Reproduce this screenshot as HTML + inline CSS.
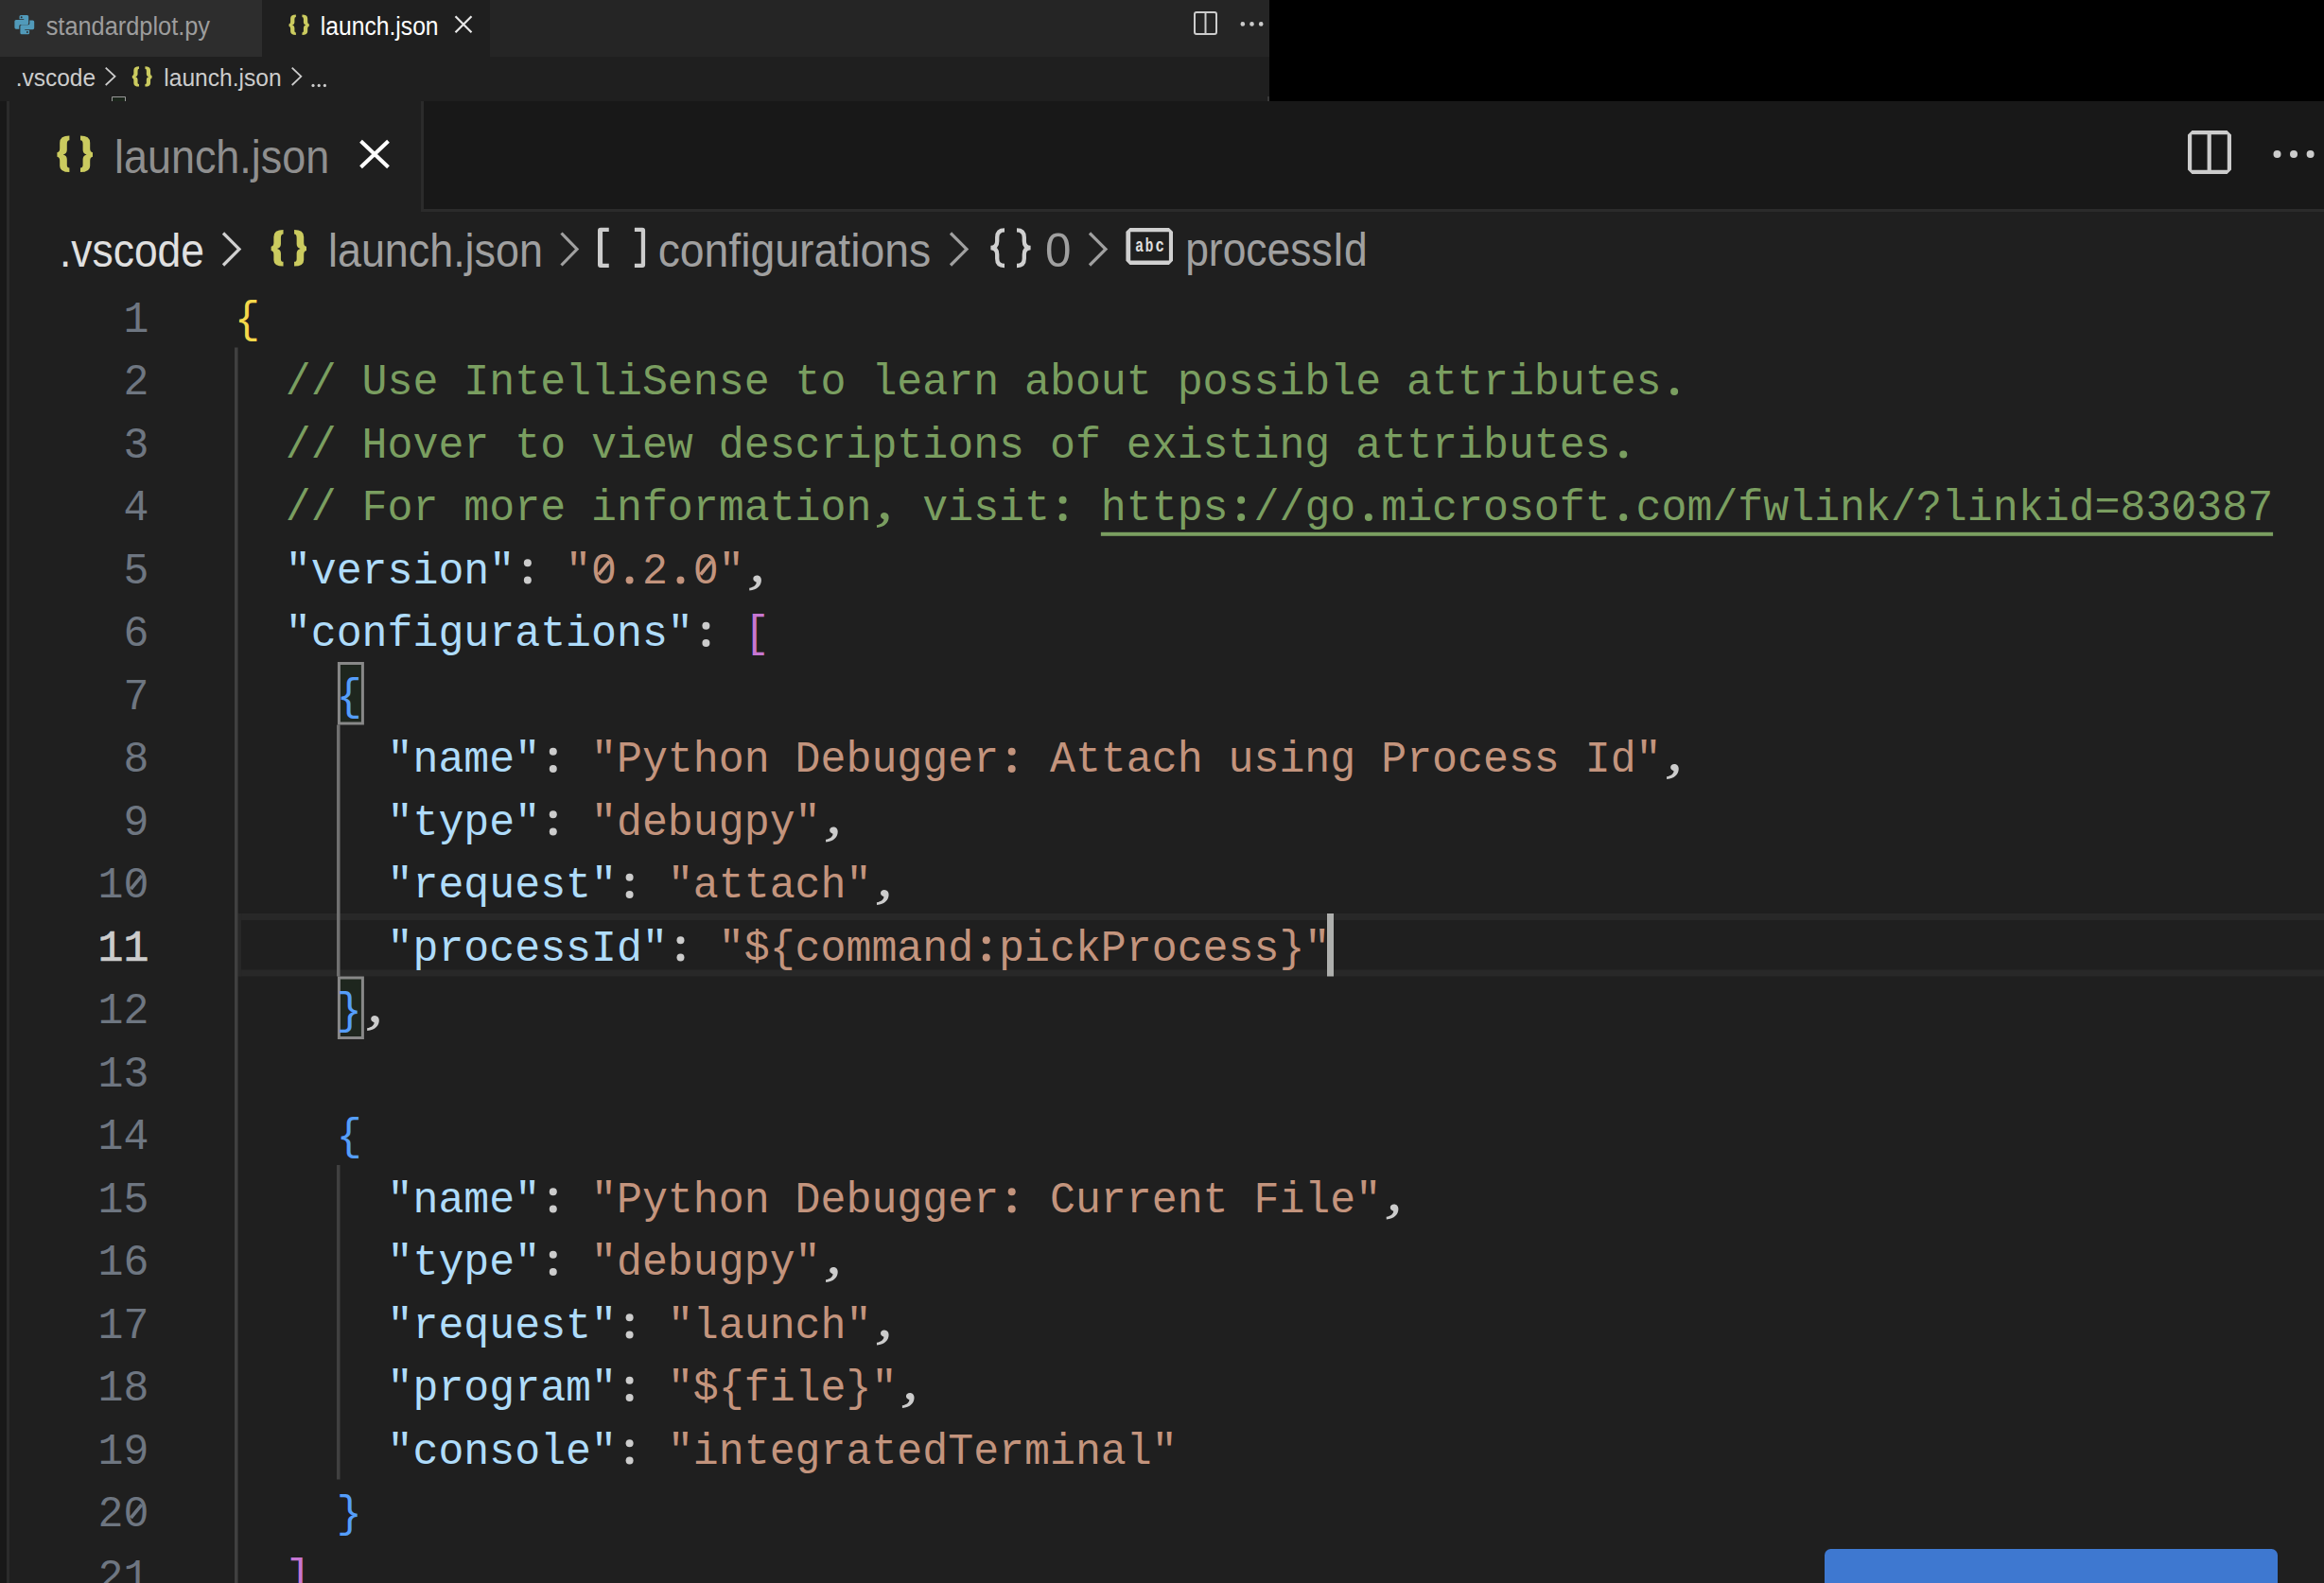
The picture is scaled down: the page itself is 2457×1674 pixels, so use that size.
<!DOCTYPE html><html><head><meta charset="utf-8"><style>
html,body{margin:0;padding:0;background:#1f1f1f;width:2457px;height:1674px;overflow:hidden}
svg{display:block}
</style></head><body>
<svg width="2457" height="1674" viewBox="0 0 2457 1674">
<rect x="0" y="0" width="2457" height="1674" fill="#1f1f1f"/>
<rect x="0" y="0" width="1342" height="60" fill="#252525"/>
<rect x="0" y="0" width="277" height="60" fill="#2d2d2d"/>
<rect x="277" y="0" width="241" height="60" fill="#1f1f1f"/>
<rect x="0" y="60" width="1342" height="47" fill="#1f1f1f"/>
<rect x="1342" y="0" width="1115" height="107" fill="#000000"/>
<rect x="1340.5" y="102" width="1" height="5" fill="#555555"/>
<rect x="118" y="102" width="15" height="5" fill="#1c261c"/>
<path d="M118.5 107 V102.5 H132.5 V107" fill="none" stroke="#9a9a9a" stroke-width="1"/>
<rect x="0" y="107" width="7" height="1567" fill="#181818"/>
<rect x="7" y="107" width="3" height="1567" fill="#2b2b2b"/>
<rect x="445" y="107" width="2012" height="117" fill="#2b2b2b"/>
<rect x="448" y="107" width="2009" height="114" fill="#181818"/>
<path d="M22 15.9 H28.7 Q30.2 15.9 30.2 17.4 V24.5 Q30.2 26 28.7 26 H21.8 Q20.3 26 20.3 27.5 V30.7 H17 Q15.4 30.7 15.4 29.1 V22.6 Q15.4 21 17 21 H25.3 V20.3 H20.5 V17.4 Q20.5 15.9 22 15.9 Z" fill="#519aba"/><circle cx="22.7" cy="18.2" r="0.95" fill="#2d2d2d"/>
<g transform="rotate(180 25.8 26.1)"><path d="M22 15.9 H28.7 Q30.2 15.9 30.2 17.4 V24.5 Q30.2 26 28.7 26 H21.8 Q20.3 26 20.3 27.5 V30.7 H17 Q15.4 30.7 15.4 29.1 V22.6 Q15.4 21 17 21 H25.3 V20.3 H20.5 V17.4 Q20.5 15.9 22 15.9 Z" fill="#519aba"/><circle cx="22.7" cy="18.2" r="0.95" fill="#2d2d2d"/></g>
<text x="48.69" y="37.40" font-family="Liberation Sans" font-size="26.80" font-weight="normal" fill="#9d9d9d" textLength="173.36" lengthAdjust="spacingAndGlyphs">standardplot.py</text>
<g transform="matrix(0.56649 0 0 0.55844 271.284 -64.692)" fill="#cbcb5f"><path d="M73.4 143.6 Q63.2 143.6 63.2 151 V157 Q63.2 160.8 60.4 161.3 V165.7 Q63.2 166.2 63.2 170 V175.5 Q63.2 182.1 73.4 182.1 V177.4 Q70.8 177.4 70.8 174.5 V168.5 Q70.8 164.7 66.8 163.5 Q70.8 162.3 70.8 158.5 V152.3 Q70.8 148.2 73.4 148.2 Z"/><path transform="matrix(-1 0 0 1 158.4 0)" d="M73.4 143.6 Q63.2 143.6 63.2 151 V157 Q63.2 160.8 60.4 161.3 V165.7 Q63.2 166.2 63.2 170 V175.5 Q63.2 182.1 73.4 182.1 V177.4 Q70.8 177.4 70.8 174.5 V168.5 Q70.8 164.7 66.8 163.5 Q70.8 162.3 70.8 158.5 V152.3 Q70.8 148.2 73.4 148.2 Z"/></g>
<text x="338.74" y="37.40" font-family="Liberation Sans" font-size="26.80" font-weight="normal" fill="#ffffff" textLength="124.87" lengthAdjust="spacingAndGlyphs">launch.json</text>
<path d="M481.5 17.3 L498.5 34.3 M498.5 17.3 L481.5 34.3" stroke="#e8e8e8" stroke-width="2.2" fill="none"/>
<rect x="1263" y="13" width="23" height="23" rx="2" fill="none" stroke="#cccccc" stroke-width="2"/>
<line x1="1274.5" y1="13" x2="1274.5" y2="36" stroke="#cccccc" stroke-width="2"/>
<circle cx="1313.8" cy="25.4" r="2.3" fill="#cccccc"/>
<circle cx="1323.5" cy="25.4" r="2.3" fill="#cccccc"/>
<circle cx="1333.2" cy="25.4" r="2.3" fill="#cccccc"/>
<text x="16.77" y="91.30" font-family="Liberation Sans" font-size="26.60" font-weight="normal" fill="#cccccc" textLength="84.32" lengthAdjust="spacingAndGlyphs">.vscode</text>
<path d="M111.7 71.6 L121.5 80.8 L111.7 90" stroke="#cccccc" stroke-width="1.8" fill="none"/>
<g transform="matrix(0.55319 0 0 0.55584 106.387 -9.619)" fill="#cbcb5f"><path d="M73.4 143.6 Q63.2 143.6 63.2 151 V157 Q63.2 160.8 60.4 161.3 V165.7 Q63.2 166.2 63.2 170 V175.5 Q63.2 182.1 73.4 182.1 V177.4 Q70.8 177.4 70.8 174.5 V168.5 Q70.8 164.7 66.8 163.5 Q70.8 162.3 70.8 158.5 V152.3 Q70.8 148.2 73.4 148.2 Z"/><path transform="matrix(-1 0 0 1 158.4 0)" d="M73.4 143.6 Q63.2 143.6 63.2 151 V157 Q63.2 160.8 60.4 161.3 V165.7 Q63.2 166.2 63.2 170 V175.5 Q63.2 182.1 73.4 182.1 V177.4 Q70.8 177.4 70.8 174.5 V168.5 Q70.8 164.7 66.8 163.5 Q70.8 162.3 70.8 158.5 V152.3 Q70.8 148.2 73.4 148.2 Z"/></g>
<text x="173.35" y="91.30" font-family="Liberation Sans" font-size="26.60" font-weight="normal" fill="#cccccc" textLength="124.25" lengthAdjust="spacingAndGlyphs">launch.json</text>
<path d="M308.7 71.6 L318.3 80.8 L308.7 90" stroke="#cccccc" stroke-width="1.8" fill="none"/>
<circle cx="331" cy="90.4" r="1.6" fill="#cccccc"/>
<circle cx="337.2" cy="90.4" r="1.6" fill="#cccccc"/>
<circle cx="343.4" cy="90.4" r="1.6" fill="#cccccc"/>
<g transform="matrix(1.00000 0 0 1.00000 0.000 0.000)" fill="#cbcb5f"><path d="M73.4 143.6 Q63.2 143.6 63.2 151 V157 Q63.2 160.8 60.4 161.3 V165.7 Q63.2 166.2 63.2 170 V175.5 Q63.2 182.1 73.4 182.1 V177.4 Q70.8 177.4 70.8 174.5 V168.5 Q70.8 164.7 66.8 163.5 Q70.8 162.3 70.8 158.5 V152.3 Q70.8 148.2 73.4 148.2 Z"/><path transform="matrix(-1 0 0 1 158.4 0)" d="M73.4 143.6 Q63.2 143.6 63.2 151 V157 Q63.2 160.8 60.4 161.3 V165.7 Q63.2 166.2 63.2 170 V175.5 Q63.2 182.1 73.4 182.1 V177.4 Q70.8 177.4 70.8 174.5 V168.5 Q70.8 164.7 66.8 163.5 Q70.8 162.3 70.8 158.5 V152.3 Q70.8 148.2 73.4 148.2 Z"/></g>
<text x="120.97" y="182.60" font-family="Liberation Sans" font-size="49.80" font-weight="normal" fill="#8f8f8f" textLength="227.24" lengthAdjust="spacingAndGlyphs">launch.json</text>
<path d="M381.5 149.3 L410.5 176.8 M410.5 149.3 L381.5 176.8" stroke="#ffffff" stroke-width="4" fill="none"/>
<path d="M2317.5 138 H2354.5 L2359 142.5 V179.5 L2354.5 184 H2317.5 L2313 179.5 V142.5 Z M2317.2 142.2 H2333.6 V179.8 H2317.2 Z M2337.8 142.2 H2354.8 V179.8 H2337.8 Z" fill="#cccccc" fill-rule="evenodd"/>
<circle cx="2407.5" cy="163" r="4" fill="#cccccc"/>
<circle cx="2425.0" cy="163" r="4" fill="#cccccc"/>
<circle cx="2442.6" cy="163" r="4" fill="#cccccc"/>
<text x="62.95" y="281.50" font-family="Liberation Sans" font-size="49.30" font-weight="normal" fill="#e0e0e0" textLength="153.03" lengthAdjust="spacingAndGlyphs">.vscode</text>
<path d="M236 246.5 L253 263.5 L236 280.5" stroke="#d0d0d0" stroke-width="3.2" fill="none"/>
<g transform="matrix(0.99468 0 0 1.00000 226.521 99.400)" fill="#cbcb5f"><path d="M73.4 143.6 Q63.2 143.6 63.2 151 V157 Q63.2 160.8 60.4 161.3 V165.7 Q63.2 166.2 63.2 170 V175.5 Q63.2 182.1 73.4 182.1 V177.4 Q70.8 177.4 70.8 174.5 V168.5 Q70.8 164.7 66.8 163.5 Q70.8 162.3 70.8 158.5 V152.3 Q70.8 148.2 73.4 148.2 Z"/><path transform="matrix(-1 0 0 1 158.4 0)" d="M73.4 143.6 Q63.2 143.6 63.2 151 V157 Q63.2 160.8 60.4 161.3 V165.7 Q63.2 166.2 63.2 170 V175.5 Q63.2 182.1 73.4 182.1 V177.4 Q70.8 177.4 70.8 174.5 V168.5 Q70.8 164.7 66.8 163.5 Q70.8 162.3 70.8 158.5 V152.3 Q70.8 148.2 73.4 148.2 Z"/></g>
<text x="346.98" y="281.50" font-family="Liberation Sans" font-size="49.30" font-weight="normal" fill="#a0a0a0" textLength="226.94" lengthAdjust="spacingAndGlyphs">launch.json</text>
<path d="M593.5 246.5 L610 263.5 L593.5 280.5" stroke="#a0a0a0" stroke-width="3.2" fill="none"/>
<path d="M643.75 240.8 H635 Q632 240.8 632 243.8 V280 Q632 283 635 283 H643.75 V278.7 H637.1 V245.1 H643.75 Z M670.9 240.8 H679.1 Q682.1 240.8 682.1 243.8 V280 Q682.1 283 679.1 283 H670.9 V278.7 H677.8 V245.1 H670.9 Z" fill="#cccccc"/>
<text x="695.63" y="281.50" font-family="Liberation Sans" font-size="49.30" font-weight="normal" fill="#a0a0a0" textLength="288.64" lengthAdjust="spacingAndGlyphs">configurations</text>
<path d="M1005 246.5 L1022 263.5 L1005 280.5" stroke="#a0a0a0" stroke-width="3.2" fill="none"/>
<path d="M1062 243.3 C1057 243.3 1054.2 246 1054.2 251 V255 C1054.2 259 1052 261.8 1047.5 262 C1052 262.2 1054.2 265 1054.2 269 V273.5 C1054.2 278.5 1057 281 1062 281 M1075 243.3 C1080 243.3 1082.8 246 1082.8 251 V255 C1082.8 259 1085 261.8 1089.5 262 C1085 262.2 1082.8 265 1082.8 269 V273.5 C1082.8 278.5 1080 281 1075 281" fill="none" stroke="#d0d0d0" stroke-width="4.3"/>
<text x="1105.07" y="281.50" font-family="Liberation Sans" font-size="49.30" font-weight="normal" fill="#a0a0a0" textLength="27.46" lengthAdjust="spacingAndGlyphs">0</text>
<path d="M1152 246.5 L1169 263.5 L1152 280.5" stroke="#a0a0a0" stroke-width="3.2" fill="none"/>
<path d="M1194.5 241 H1235.9 L1240 245.1 V275.79999999999995 L1235.9 279.9 H1194.5 L1190.4 275.79999999999995 V245.1 Z M1195.2 245.2 H1235.9 V275.5 H1195.2 Z" fill="#d0d0d0" fill-rule="evenodd"/>
<text transform="matrix(0.14441 0 0 0.20626 1200.58 265.70)" font-family="Liberation Sans" font-size="100.0" font-weight="bold" fill="#e0e0e0">a</text>
<text transform="matrix(0.13891 0 0 0.20017 1210.68 265.70)" font-family="Liberation Sans" font-size="100.0" font-weight="bold" fill="#e0e0e0">b</text>
<text transform="matrix(0.15580 0 0 0.20626 1221.69 265.70)" font-family="Liberation Sans" font-size="100.0" font-weight="bold" fill="#e0e0e0">c</text>
<text x="1253.13" y="281.40" font-family="Liberation Sans" font-size="49.30" font-weight="normal" fill="#a0a0a0" textLength="192.73" lengthAdjust="spacingAndGlyphs">processId</text>
<rect x="251.6" y="966.0" width="2205.4" height="7" fill="#282828"/>
<rect x="251.6" y="1025.5" width="2205.4" height="7" fill="#282828"/>
<rect x="251.6" y="966.0" width="3.5" height="66.5" fill="#282828"/>
<rect x="248" y="367.5" width="3.5" height="1306.5" fill="#404040"/>
<rect x="356" y="766.5" width="3.5" height="266.0" fill="#707070"/>
<rect x="356" y="1232.0" width="3.5" height="332.5" fill="#404040"/>
<rect x="358.4" y="701.5" width="25" height="63.5" fill="#1e261e" stroke="#888888" stroke-width="3"/>
<rect x="358.4" y="1034.0" width="25" height="63.5" fill="#1e261e" stroke="#888888" stroke-width="3"/>
<text x="130.56" y="350.60" font-family="Liberation Mono" font-size="47.0" fill="#6e7681" textLength="26.94" lengthAdjust="spacingAndGlyphs">1</text>
<text x="130.56" y="417.10" font-family="Liberation Mono" font-size="47.0" fill="#6e7681" textLength="26.94" lengthAdjust="spacingAndGlyphs">2</text>
<text x="130.56" y="483.60" font-family="Liberation Mono" font-size="47.0" fill="#6e7681" textLength="26.94" lengthAdjust="spacingAndGlyphs">3</text>
<text x="130.56" y="550.10" font-family="Liberation Mono" font-size="47.0" fill="#6e7681" textLength="26.94" lengthAdjust="spacingAndGlyphs">4</text>
<text x="130.56" y="616.60" font-family="Liberation Mono" font-size="47.0" fill="#6e7681" textLength="26.94" lengthAdjust="spacingAndGlyphs">5</text>
<text x="130.56" y="683.10" font-family="Liberation Mono" font-size="47.0" fill="#6e7681" textLength="26.94" lengthAdjust="spacingAndGlyphs">6</text>
<text x="130.56" y="749.60" font-family="Liberation Mono" font-size="47.0" fill="#6e7681" textLength="26.94" lengthAdjust="spacingAndGlyphs">7</text>
<text x="130.56" y="816.10" font-family="Liberation Mono" font-size="47.0" fill="#6e7681" textLength="26.94" lengthAdjust="spacingAndGlyphs">8</text>
<text x="130.56" y="882.60" font-family="Liberation Mono" font-size="47.0" fill="#6e7681" textLength="26.94" lengthAdjust="spacingAndGlyphs">9</text>
<text x="103.62" y="949.10" font-family="Liberation Mono" font-size="47.0" fill="#6e7681" textLength="53.88" lengthAdjust="spacingAndGlyphs">10</text>
<text x="103.62" y="1015.60" font-family="Liberation Mono" font-size="47.0" fill="#cccccc" stroke="#cccccc" stroke-width="0.7" textLength="53.88" lengthAdjust="spacingAndGlyphs">11</text>
<text x="103.62" y="1082.10" font-family="Liberation Mono" font-size="47.0" fill="#6e7681" textLength="53.88" lengthAdjust="spacingAndGlyphs">12</text>
<text x="103.62" y="1148.60" font-family="Liberation Mono" font-size="47.0" fill="#6e7681" textLength="53.88" lengthAdjust="spacingAndGlyphs">13</text>
<text x="103.62" y="1215.10" font-family="Liberation Mono" font-size="47.0" fill="#6e7681" textLength="53.88" lengthAdjust="spacingAndGlyphs">14</text>
<text x="103.62" y="1281.60" font-family="Liberation Mono" font-size="47.0" fill="#6e7681" textLength="53.88" lengthAdjust="spacingAndGlyphs">15</text>
<text x="103.62" y="1348.10" font-family="Liberation Mono" font-size="47.0" fill="#6e7681" textLength="53.88" lengthAdjust="spacingAndGlyphs">16</text>
<text x="103.62" y="1414.60" font-family="Liberation Mono" font-size="47.0" fill="#6e7681" textLength="53.88" lengthAdjust="spacingAndGlyphs">17</text>
<text x="103.62" y="1481.10" font-family="Liberation Mono" font-size="47.0" fill="#6e7681" textLength="53.88" lengthAdjust="spacingAndGlyphs">18</text>
<text x="103.62" y="1547.60" font-family="Liberation Mono" font-size="47.0" fill="#6e7681" textLength="53.88" lengthAdjust="spacingAndGlyphs">19</text>
<text x="103.62" y="1614.10" font-family="Liberation Mono" font-size="47.0" fill="#6e7681" textLength="53.88" lengthAdjust="spacingAndGlyphs">20</text>
<text x="103.62" y="1680.60" font-family="Liberation Mono" font-size="47.0" fill="#6e7681" textLength="53.88" lengthAdjust="spacingAndGlyphs">21</text>
<text x="247.90" y="350.60" font-family="Liberation Mono" font-size="47.0" fill="#f5d84b" textLength="26.94" lengthAdjust="spacingAndGlyphs"  xml:space="preserve">{</text>
<text x="301.78" y="417.10" font-family="Liberation Mono" font-size="47.0" fill="#7a9e60" textLength="1481.70" lengthAdjust="spacingAndGlyphs"  xml:space="preserve">// Use IntelliSense to learn about possible attributes </text>
<text x="301.78" y="483.60" font-family="Liberation Mono" font-size="47.0" fill="#7a9e60" textLength="1427.82" lengthAdjust="spacingAndGlyphs"  xml:space="preserve">// Hover to view descriptions of existing attributes </text>
<text x="301.78" y="550.10" font-family="Liberation Mono" font-size="47.0" fill="#7a9e60" textLength="862.08" lengthAdjust="spacingAndGlyphs"  xml:space="preserve">// For more information  visit  </text>
<text x="1163.86" y="550.10" font-family="Liberation Mono" font-size="47.0" fill="#7a9e60" textLength="1239.24" lengthAdjust="spacingAndGlyphs"  xml:space="preserve">https //go microsoft com/fwlink/?linkid=830387</text>
<rect x="1163.86" y="562.8" width="1239.24" height="4" fill="#7a9e60"/>
<text x="301.78" y="616.60" font-family="Liberation Mono" font-size="47.0" fill="#afdcfa" textLength="242.46" lengthAdjust="spacingAndGlyphs"  xml:space="preserve">"version"</text>
<text x="544.24" y="616.60" font-family="Liberation Mono" font-size="47.0" fill="#cccccc" textLength="26.94" lengthAdjust="spacingAndGlyphs"  xml:space="preserve"> </text>
<text x="598.12" y="616.60" font-family="Liberation Mono" font-size="47.0" fill="#c3947d" textLength="188.58" lengthAdjust="spacingAndGlyphs"  xml:space="preserve">"0 2 0"</text>
<text x="786.70" y="616.60" font-family="Liberation Mono" font-size="47.0" fill="#cccccc" textLength="26.94" lengthAdjust="spacingAndGlyphs"  xml:space="preserve"> </text>
<text x="301.78" y="683.10" font-family="Liberation Mono" font-size="47.0" fill="#afdcfa" textLength="431.04" lengthAdjust="spacingAndGlyphs"  xml:space="preserve">"configurations"</text>
<text x="732.82" y="683.10" font-family="Liberation Mono" font-size="47.0" fill="#cccccc" textLength="26.94" lengthAdjust="spacingAndGlyphs"  xml:space="preserve"> </text>
<text x="786.70" y="683.10" font-family="Liberation Mono" font-size="47.0" fill="#c676d2" textLength="26.94" lengthAdjust="spacingAndGlyphs"  xml:space="preserve">[</text>
<text x="355.66" y="749.60" font-family="Liberation Mono" font-size="47.0" fill="#559efa" textLength="26.94" lengthAdjust="spacingAndGlyphs"  xml:space="preserve">{</text>
<text x="409.54" y="816.10" font-family="Liberation Mono" font-size="47.0" fill="#afdcfa" textLength="161.64" lengthAdjust="spacingAndGlyphs"  xml:space="preserve">"name"</text>
<text x="571.18" y="816.10" font-family="Liberation Mono" font-size="47.0" fill="#cccccc" textLength="26.94" lengthAdjust="spacingAndGlyphs"  xml:space="preserve"> </text>
<text x="625.06" y="816.10" font-family="Liberation Mono" font-size="47.0" fill="#c3947d" textLength="1131.48" lengthAdjust="spacingAndGlyphs"  xml:space="preserve">"Python Debugger  Attach using Process Id"</text>
<text x="1756.54" y="816.10" font-family="Liberation Mono" font-size="47.0" fill="#cccccc" textLength="26.94" lengthAdjust="spacingAndGlyphs"  xml:space="preserve"> </text>
<text x="409.54" y="882.60" font-family="Liberation Mono" font-size="47.0" fill="#afdcfa" textLength="161.64" lengthAdjust="spacingAndGlyphs"  xml:space="preserve">"type"</text>
<text x="571.18" y="882.60" font-family="Liberation Mono" font-size="47.0" fill="#cccccc" textLength="26.94" lengthAdjust="spacingAndGlyphs"  xml:space="preserve"> </text>
<text x="625.06" y="882.60" font-family="Liberation Mono" font-size="47.0" fill="#c3947d" textLength="242.46" lengthAdjust="spacingAndGlyphs"  xml:space="preserve">"debugpy"</text>
<text x="867.52" y="882.60" font-family="Liberation Mono" font-size="47.0" fill="#cccccc" textLength="26.94" lengthAdjust="spacingAndGlyphs"  xml:space="preserve"> </text>
<text x="409.54" y="949.10" font-family="Liberation Mono" font-size="47.0" fill="#afdcfa" textLength="242.46" lengthAdjust="spacingAndGlyphs"  xml:space="preserve">"request"</text>
<text x="652.00" y="949.10" font-family="Liberation Mono" font-size="47.0" fill="#cccccc" textLength="26.94" lengthAdjust="spacingAndGlyphs"  xml:space="preserve"> </text>
<text x="705.88" y="949.10" font-family="Liberation Mono" font-size="47.0" fill="#c3947d" textLength="215.52" lengthAdjust="spacingAndGlyphs"  xml:space="preserve">"attach"</text>
<text x="921.40" y="949.10" font-family="Liberation Mono" font-size="47.0" fill="#cccccc" textLength="26.94" lengthAdjust="spacingAndGlyphs"  xml:space="preserve"> </text>
<text x="409.54" y="1015.60" font-family="Liberation Mono" font-size="47.0" fill="#afdcfa" textLength="296.34" lengthAdjust="spacingAndGlyphs"  xml:space="preserve">"processId"</text>
<text x="705.88" y="1015.60" font-family="Liberation Mono" font-size="47.0" fill="#cccccc" textLength="26.94" lengthAdjust="spacingAndGlyphs"  xml:space="preserve"> </text>
<text x="759.76" y="1015.60" font-family="Liberation Mono" font-size="47.0" fill="#c3947d" textLength="646.56" lengthAdjust="spacingAndGlyphs"  xml:space="preserve">"${command pickProcess}"</text>
<text x="355.66" y="1082.10" font-family="Liberation Mono" font-size="47.0" fill="#559efa" textLength="26.94" lengthAdjust="spacingAndGlyphs"  xml:space="preserve">}</text>
<text x="382.60" y="1082.10" font-family="Liberation Mono" font-size="47.0" fill="#cccccc" textLength="26.94" lengthAdjust="spacingAndGlyphs"  xml:space="preserve"> </text>
<text x="355.66" y="1215.10" font-family="Liberation Mono" font-size="47.0" fill="#559efa" textLength="26.94" lengthAdjust="spacingAndGlyphs"  xml:space="preserve">{</text>
<text x="409.54" y="1281.60" font-family="Liberation Mono" font-size="47.0" fill="#afdcfa" textLength="161.64" lengthAdjust="spacingAndGlyphs"  xml:space="preserve">"name"</text>
<text x="571.18" y="1281.60" font-family="Liberation Mono" font-size="47.0" fill="#cccccc" textLength="26.94" lengthAdjust="spacingAndGlyphs"  xml:space="preserve"> </text>
<text x="625.06" y="1281.60" font-family="Liberation Mono" font-size="47.0" fill="#c3947d" textLength="835.14" lengthAdjust="spacingAndGlyphs"  xml:space="preserve">"Python Debugger  Current File"</text>
<text x="1460.20" y="1281.60" font-family="Liberation Mono" font-size="47.0" fill="#cccccc" textLength="26.94" lengthAdjust="spacingAndGlyphs"  xml:space="preserve"> </text>
<text x="409.54" y="1348.10" font-family="Liberation Mono" font-size="47.0" fill="#afdcfa" textLength="161.64" lengthAdjust="spacingAndGlyphs"  xml:space="preserve">"type"</text>
<text x="571.18" y="1348.10" font-family="Liberation Mono" font-size="47.0" fill="#cccccc" textLength="26.94" lengthAdjust="spacingAndGlyphs"  xml:space="preserve"> </text>
<text x="625.06" y="1348.10" font-family="Liberation Mono" font-size="47.0" fill="#c3947d" textLength="242.46" lengthAdjust="spacingAndGlyphs"  xml:space="preserve">"debugpy"</text>
<text x="867.52" y="1348.10" font-family="Liberation Mono" font-size="47.0" fill="#cccccc" textLength="26.94" lengthAdjust="spacingAndGlyphs"  xml:space="preserve"> </text>
<text x="409.54" y="1414.60" font-family="Liberation Mono" font-size="47.0" fill="#afdcfa" textLength="242.46" lengthAdjust="spacingAndGlyphs"  xml:space="preserve">"request"</text>
<text x="652.00" y="1414.60" font-family="Liberation Mono" font-size="47.0" fill="#cccccc" textLength="26.94" lengthAdjust="spacingAndGlyphs"  xml:space="preserve"> </text>
<text x="705.88" y="1414.60" font-family="Liberation Mono" font-size="47.0" fill="#c3947d" textLength="215.52" lengthAdjust="spacingAndGlyphs"  xml:space="preserve">"launch"</text>
<text x="921.40" y="1414.60" font-family="Liberation Mono" font-size="47.0" fill="#cccccc" textLength="26.94" lengthAdjust="spacingAndGlyphs"  xml:space="preserve"> </text>
<text x="409.54" y="1481.10" font-family="Liberation Mono" font-size="47.0" fill="#afdcfa" textLength="242.46" lengthAdjust="spacingAndGlyphs"  xml:space="preserve">"program"</text>
<text x="652.00" y="1481.10" font-family="Liberation Mono" font-size="47.0" fill="#cccccc" textLength="26.94" lengthAdjust="spacingAndGlyphs"  xml:space="preserve"> </text>
<text x="705.88" y="1481.10" font-family="Liberation Mono" font-size="47.0" fill="#c3947d" textLength="242.46" lengthAdjust="spacingAndGlyphs"  xml:space="preserve">"${file}"</text>
<text x="948.34" y="1481.10" font-family="Liberation Mono" font-size="47.0" fill="#cccccc" textLength="26.94" lengthAdjust="spacingAndGlyphs"  xml:space="preserve"> </text>
<text x="409.54" y="1547.60" font-family="Liberation Mono" font-size="47.0" fill="#afdcfa" textLength="242.46" lengthAdjust="spacingAndGlyphs"  xml:space="preserve">"console"</text>
<text x="652.00" y="1547.60" font-family="Liberation Mono" font-size="47.0" fill="#cccccc" textLength="26.94" lengthAdjust="spacingAndGlyphs"  xml:space="preserve"> </text>
<text x="705.88" y="1547.60" font-family="Liberation Mono" font-size="47.0" fill="#c3947d" textLength="538.80" lengthAdjust="spacingAndGlyphs"  xml:space="preserve">"integratedTerminal"</text>
<text x="355.66" y="1614.10" font-family="Liberation Mono" font-size="47.0" fill="#559efa" textLength="26.94" lengthAdjust="spacingAndGlyphs"  xml:space="preserve">}</text>
<text x="301.78" y="1680.60" font-family="Liberation Mono" font-size="47.0" fill="#c676d2" textLength="26.94" lengthAdjust="spacingAndGlyphs"  xml:space="preserve">]</text>
<rect x="140.76" y="929.90" width="6.4" height="7.4" fill="#1f1f1f"/><line x1="138.36" y1="940.10" x2="149.86" y2="926.10" stroke="#6e7681" stroke-width="3.8"/><rect x="140.76" y="1594.90" width="6.4" height="7.4" fill="#1f1f1f"/><line x1="138.36" y1="1605.10" x2="149.86" y2="1591.10" stroke="#6e7681" stroke-width="3.8"/><circle cx="1770.14" cy="414.00" r="4" fill="#7a9e60"/><circle cx="1716.26" cy="480.50" r="4" fill="#7a9e60"/><path transform="translate(921.40 550.10)" d="M13.6 -8.2 C16.6 -8.2 18.2 -6 18.2 -3.2 C18.2 2.5 14 7 5.6 7.9 L5.5 5.2 C10.5 4.3 13 1.6 13 -0.9 C11 -1.7 9.6 -3 9.6 -4.6 C9.6 -6.8 11.3 -8.2 13.6 -8.2 Z" fill="#7a9e60"/><circle cx="1123.58" cy="528.70" r="4" fill="#7a9e60"/><circle cx="1123.58" cy="547.00" r="4" fill="#7a9e60"/><circle cx="1312.16" cy="528.70" r="4" fill="#7a9e60"/><circle cx="1312.16" cy="547.00" r="4" fill="#7a9e60"/><circle cx="1446.86" cy="547.00" r="4" fill="#7a9e60"/><circle cx="1716.26" cy="547.00" r="4" fill="#7a9e60"/><rect x="2305.54" y="530.90" width="6.4" height="7.4" fill="#1f1f1f"/><line x1="2303.14" y1="541.10" x2="2314.64" y2="527.10" stroke="#7a9e60" stroke-width="3.8"/><circle cx="557.84" cy="595.20" r="4" fill="#cccccc"/><circle cx="557.84" cy="613.50" r="4" fill="#cccccc"/><rect x="635.26" y="597.40" width="6.4" height="7.4" fill="#1f1f1f"/><line x1="632.86" y1="607.60" x2="644.36" y2="593.60" stroke="#c3947d" stroke-width="3.8"/><circle cx="665.60" cy="613.50" r="4" fill="#c3947d"/><circle cx="719.48" cy="613.50" r="4" fill="#c3947d"/><rect x="743.02" y="597.40" width="6.4" height="7.4" fill="#1f1f1f"/><line x1="740.62" y1="607.60" x2="752.12" y2="593.60" stroke="#c3947d" stroke-width="3.8"/><path transform="translate(786.70 616.60)" d="M13.6 -8.2 C16.6 -8.2 18.2 -6 18.2 -3.2 C18.2 2.5 14 7 5.6 7.9 L5.5 5.2 C10.5 4.3 13 1.6 13 -0.9 C11 -1.7 9.6 -3 9.6 -4.6 C9.6 -6.8 11.3 -8.2 13.6 -8.2 Z" fill="#cccccc"/><circle cx="746.42" cy="661.70" r="4" fill="#cccccc"/><circle cx="746.42" cy="680.00" r="4" fill="#cccccc"/><circle cx="584.78" cy="794.70" r="4" fill="#cccccc"/><circle cx="584.78" cy="813.00" r="4" fill="#cccccc"/><circle cx="1069.70" cy="794.70" r="4" fill="#c3947d"/><circle cx="1069.70" cy="813.00" r="4" fill="#c3947d"/><path transform="translate(1756.54 816.10)" d="M13.6 -8.2 C16.6 -8.2 18.2 -6 18.2 -3.2 C18.2 2.5 14 7 5.6 7.9 L5.5 5.2 C10.5 4.3 13 1.6 13 -0.9 C11 -1.7 9.6 -3 9.6 -4.6 C9.6 -6.8 11.3 -8.2 13.6 -8.2 Z" fill="#cccccc"/><circle cx="584.78" cy="861.20" r="4" fill="#cccccc"/><circle cx="584.78" cy="879.50" r="4" fill="#cccccc"/><path transform="translate(867.52 882.60)" d="M13.6 -8.2 C16.6 -8.2 18.2 -6 18.2 -3.2 C18.2 2.5 14 7 5.6 7.9 L5.5 5.2 C10.5 4.3 13 1.6 13 -0.9 C11 -1.7 9.6 -3 9.6 -4.6 C9.6 -6.8 11.3 -8.2 13.6 -8.2 Z" fill="#cccccc"/><circle cx="665.60" cy="927.70" r="4" fill="#cccccc"/><circle cx="665.60" cy="946.00" r="4" fill="#cccccc"/><path transform="translate(921.40 949.10)" d="M13.6 -8.2 C16.6 -8.2 18.2 -6 18.2 -3.2 C18.2 2.5 14 7 5.6 7.9 L5.5 5.2 C10.5 4.3 13 1.6 13 -0.9 C11 -1.7 9.6 -3 9.6 -4.6 C9.6 -6.8 11.3 -8.2 13.6 -8.2 Z" fill="#cccccc"/><circle cx="719.48" cy="994.20" r="4" fill="#cccccc"/><circle cx="719.48" cy="1012.50" r="4" fill="#cccccc"/><circle cx="1042.76" cy="994.20" r="4" fill="#c3947d"/><circle cx="1042.76" cy="1012.50" r="4" fill="#c3947d"/><path transform="translate(382.60 1082.10)" d="M13.6 -8.2 C16.6 -8.2 18.2 -6 18.2 -3.2 C18.2 2.5 14 7 5.6 7.9 L5.5 5.2 C10.5 4.3 13 1.6 13 -0.9 C11 -1.7 9.6 -3 9.6 -4.6 C9.6 -6.8 11.3 -8.2 13.6 -8.2 Z" fill="#cccccc"/><circle cx="584.78" cy="1260.20" r="4" fill="#cccccc"/><circle cx="584.78" cy="1278.50" r="4" fill="#cccccc"/><circle cx="1069.70" cy="1260.20" r="4" fill="#c3947d"/><circle cx="1069.70" cy="1278.50" r="4" fill="#c3947d"/><path transform="translate(1460.20 1281.60)" d="M13.6 -8.2 C16.6 -8.2 18.2 -6 18.2 -3.2 C18.2 2.5 14 7 5.6 7.9 L5.5 5.2 C10.5 4.3 13 1.6 13 -0.9 C11 -1.7 9.6 -3 9.6 -4.6 C9.6 -6.8 11.3 -8.2 13.6 -8.2 Z" fill="#cccccc"/><circle cx="584.78" cy="1326.70" r="4" fill="#cccccc"/><circle cx="584.78" cy="1345.00" r="4" fill="#cccccc"/><path transform="translate(867.52 1348.10)" d="M13.6 -8.2 C16.6 -8.2 18.2 -6 18.2 -3.2 C18.2 2.5 14 7 5.6 7.9 L5.5 5.2 C10.5 4.3 13 1.6 13 -0.9 C11 -1.7 9.6 -3 9.6 -4.6 C9.6 -6.8 11.3 -8.2 13.6 -8.2 Z" fill="#cccccc"/><circle cx="665.60" cy="1393.20" r="4" fill="#cccccc"/><circle cx="665.60" cy="1411.50" r="4" fill="#cccccc"/><path transform="translate(921.40 1414.60)" d="M13.6 -8.2 C16.6 -8.2 18.2 -6 18.2 -3.2 C18.2 2.5 14 7 5.6 7.9 L5.5 5.2 C10.5 4.3 13 1.6 13 -0.9 C11 -1.7 9.6 -3 9.6 -4.6 C9.6 -6.8 11.3 -8.2 13.6 -8.2 Z" fill="#cccccc"/><circle cx="665.60" cy="1459.70" r="4" fill="#cccccc"/><circle cx="665.60" cy="1478.00" r="4" fill="#cccccc"/><path transform="translate(948.34 1481.10)" d="M13.6 -8.2 C16.6 -8.2 18.2 -6 18.2 -3.2 C18.2 2.5 14 7 5.6 7.9 L5.5 5.2 C10.5 4.3 13 1.6 13 -0.9 C11 -1.7 9.6 -3 9.6 -4.6 C9.6 -6.8 11.3 -8.2 13.6 -8.2 Z" fill="#cccccc"/><circle cx="665.60" cy="1526.20" r="4" fill="#cccccc"/><circle cx="665.60" cy="1544.50" r="4" fill="#cccccc"/>
<rect x="1403" y="966.0" width="7" height="66.5" fill="#aeafad"/>
<rect x="1929" y="1638" width="479" height="60" rx="6.5" fill="#3e78d0"/>
</svg></body></html>
